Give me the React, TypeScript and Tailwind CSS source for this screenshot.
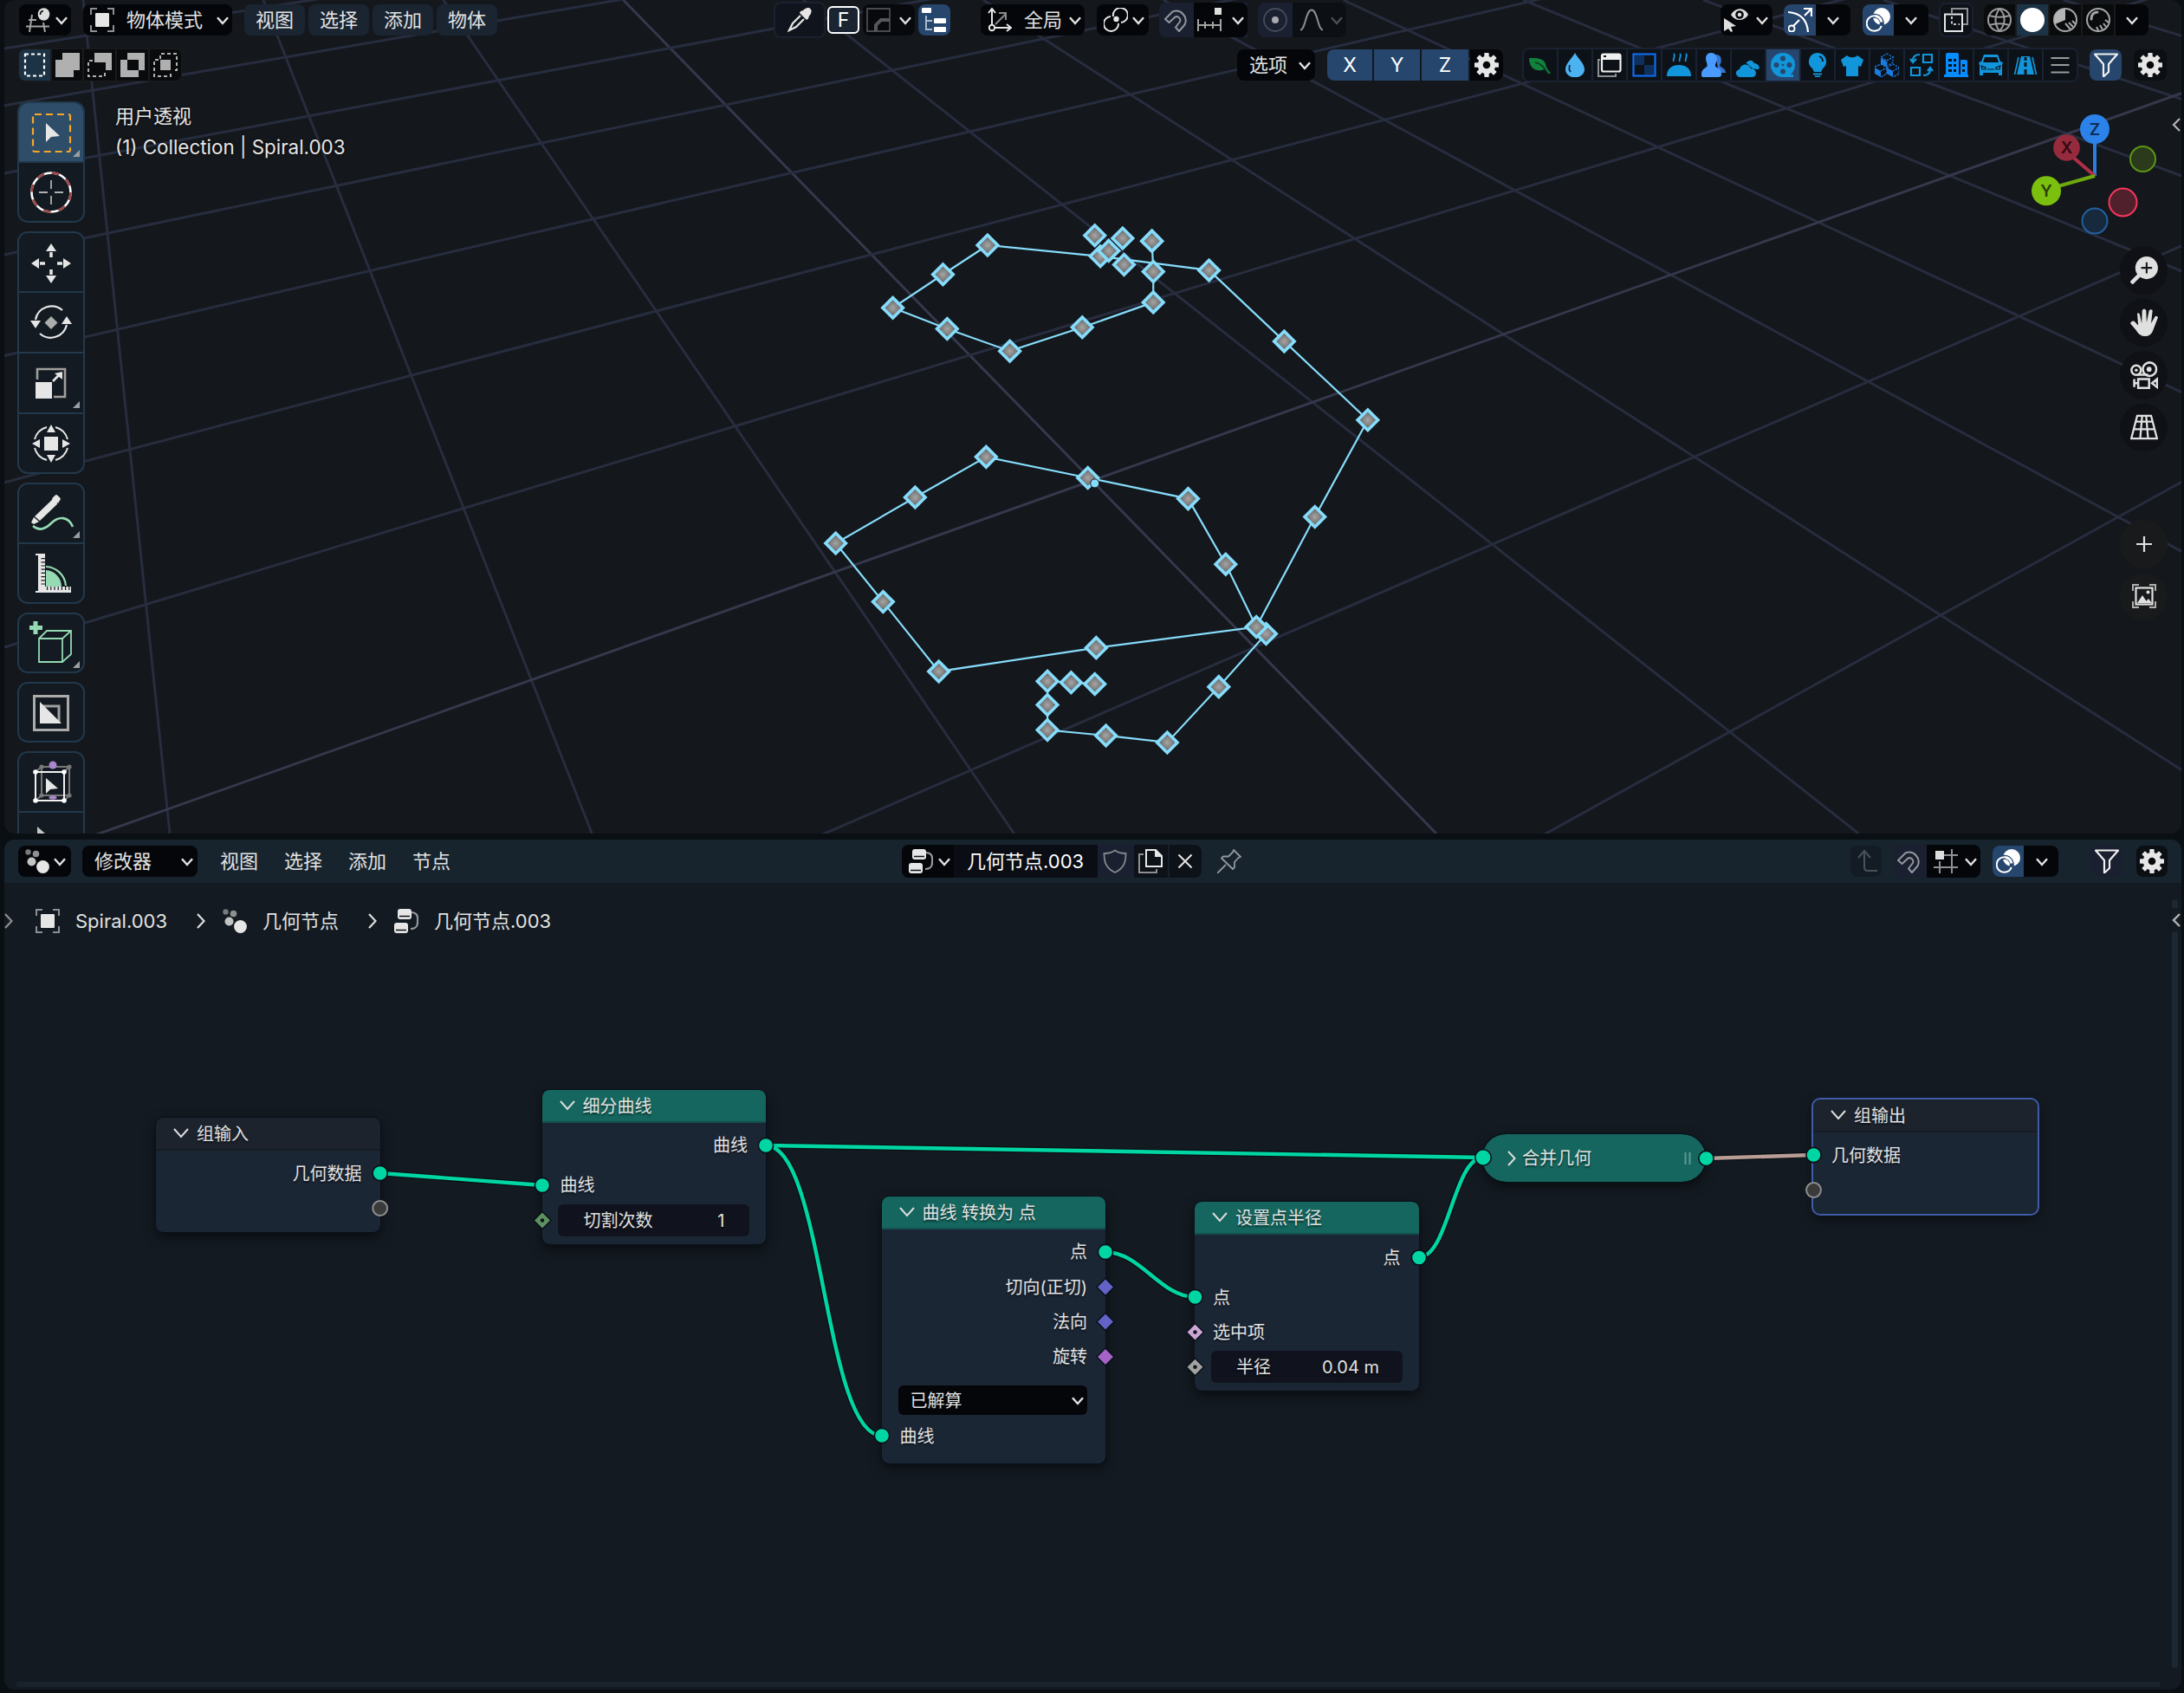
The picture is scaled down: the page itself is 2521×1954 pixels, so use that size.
import React from 'react';

type P = { children?: React.ReactNode; className?: string };

const Ic = ({ children, className = '' }: P) => (
  <svg viewBox="0 0 28 28" className={`w-[28px] h-[28px] shrink-0 ${className}`} fill="none" strokeLinecap="butt">
    {children}
  </svg>
);

const Chev = ({ className = '' }: { className?: string }) => (
  <svg viewBox="0 0 14 10" className={`relative top-px w-[14px] h-[10px] shrink-0 ${className}`} fill="none" stroke="#e2e2e2" strokeWidth="2.4">
    <path d="M1 1.2 7 8l6-6.8" />
  </svg>
);

const Box = ({ children, className = '' }: P) => (
  <div className={`h-[36px] flex items-center shrink-0 ${className}`}>{children}</div>
);

/* ---------- icons ---------- */
const EditorIcon = () => (
  <Ic>
    <g stroke="#a3a3a3" strokeWidth="2">
      <path d="M3 14h9M0 21.500h27M7 8 4 28M20 17l2 11" />
    </g>
    <ellipse cx="20.500" cy="7.500" rx="6.800" ry="7.300" fill="#dedede" />
    <path d="M16.500 8a4 4.500 0 0 1 3.500-4.500" stroke="#05070b" strokeWidth="1.600" />
  </Ic>
);
const ObjectIcon = () => (
  <Ic>
    <path d="M1 8V1h7M20 1h7v7M27 20v7h-7M8 27H1v-7" stroke="#8d8f92" strokeWidth="2" />
    <rect x="6" y="6" width="16" height="16" rx="1" fill="#e6e6e6" />
  </Ic>
);
const DropperIcon = () => (
  <Ic>
    <path d="M15 4c3 0 4-3 8-4 3-.500 5 2 4.500 5-.500 3-3 4-3.500 7.500l-2 1.500-8-8z" fill="#e6e6e6" />
    <path d="m15 9-9 9-4 8 8-4 9-9" stroke="#e6e6e6" strokeWidth="2.200" />
  </Ic>
);
const FalloffIcon = () => (
  <Ic>
    <path d="M1 1h26v26H1z" stroke="#4a4a4c" strokeWidth="1.800" />
    <path d="M11 27v-7l6-6h10" stroke="#55575a" strokeWidth="4" />
  </Ic>
);
const TreeIcon = () => (
  <Ic>
    <rect x="0" y="0" width="11" height="6" rx="1" fill="#fff" />
    <rect x="14" y="12" width="14" height="6" rx="1" fill="#fff" />
    <rect x="14" y="22" width="14" height="6" rx="1" fill="#fff" />
    <path d="M5 9v16h7M5 15h7" stroke="#a9b8ca" strokeWidth="2" />
  </Ic>
);
const OrientIcon = () => (
  <Ic>
    <path d="M5 20V2M1 6l4-5 4 5M8 23h18M22 19l5 4-5 4" stroke="#e6e6e6" strokeWidth="2" />
    <circle cx="5" cy="23" r="3.200" stroke="#e6e6e6" strokeWidth="2" />
    <path d="m9 19 12-12M13 6h8v8" stroke="#8a8a8a" strokeWidth="2" />
  </Ic>
);
const PivotIcon = () => (
  <Ic>
    <path d="M20 17a8.500 8.500 0 1 0-9-7" stroke="#e6e6e6" strokeWidth="2" />
    <path d="M8 10a8.500 8.500 0 1 0 9 8" stroke="#e6e6e6" strokeWidth="2" />
    <circle cx="14.500" cy="13" r="3.200" fill="#e6e6e6" />
  </Ic>
);
const MagnetIcon = () => (
  <Ic>
    <path
      d="M1 13 9.500 4.500a11 11 0 0 1 14 15L17 27l-4-4.500 5-6.500a4.200 4.200 0 0 0-5.500-5.500L5.500 17z"
      stroke="#93969c"
      strokeWidth="2"
      strokeLinejoin="round"
    />
  </Ic>
);
const SnapIncIcon = () => (
  <Ic>
    <rect x="20" y="0" width="8" height="8" fill="#dedede" />
    <path d="M1 13v14M27 13v14M9 16v8M18 16v8M1 20h26" stroke="#a3a3a3" strokeWidth="2" />
  </Ic>
);
const PropIcon = () => (
  <Ic>
    <circle cx="14" cy="14" r="13" stroke="#454b59" strokeWidth="1.800" />
    <circle cx="14" cy="14" r="4" fill="#a7a9ae" />
  </Ic>
);
const BellIcon = () => (
  <Ic>
    <path d="M1 25.500c6 0 6-23 13-23s7 23 13 23" stroke="#8c8d8f" strokeWidth="2" />
  </Ic>
);
const VisIcon = () => (
  <Ic>
    <path d="M8 8c5-9 16-9 20 0-5 8-15 8-20 0z" fill="#dedede" />
    <circle cx="18" cy="8" r="4.800" fill="#06080c" />
    <circle cx="18" cy="8" r="2.300" fill="#dedede" />
    <path d="M0 12v15l5-3 3 4 2-1-2-5 6-1z" fill="#dedede" />
  </Ic>
);
const GizmoIcon = () => (
  <Ic>
    <path d="M0 5c14 1 22 9 23 23M6 21 13 14M19 9l8-8M18 1h9v9" stroke="#fff" strokeWidth="2.200" />
    <circle cx="4" cy="24" r="3.500" stroke="#fff" strokeWidth="2" fill="#26466d" />
  </Ic>
);
const OverlayIcon = () => (
  <Ic>
    <circle cx="18" cy="10" r="10" fill="#fff" />
    <circle cx="9.500" cy="18" r="8.800" stroke="#26466d" strokeWidth="5" />
    <circle cx="9.500" cy="18" r="8.800" stroke="#fff" strokeWidth="2" strokeDasharray="42 14" strokeDashoffset="-3" />
    <path d="M11 9.500c3 .500 6 3 7 7" stroke="#fff" strokeWidth="3" />
  </Ic>
);
const XrayIcon = () => (
  <Ic>
    <path d="M9 6V1h18v18h-5" stroke="#8d8f92" strokeWidth="2" />
    <rect x="1" y="7.500" width="20" height="19.500" stroke="#e6e6e6" strokeWidth="2" />
    <path d="M9 10v9h9" stroke="#c6c6c6" strokeWidth="2" strokeDasharray="3 2.500" />
  </Ic>
);
const WireIcon = () => (
  <Ic>
    <g stroke="#9c9c9c" strokeWidth="2">
      <circle cx="14" cy="14" r="13" />
      <path d="M14 1c-6 8-6 18 0 26M14 1c8 8 7 18 0 26M2 9c7 2 17 2 24 0M2 20c7-2 17-2 24 0" />
    </g>
  </Ic>
);
const SolidIcon = () => (
  <Ic>
    <circle cx="14" cy="14" r="14" fill="#fff" />
  </Ic>
);
const MatIcon = () => (
  <Ic>
    <circle cx="14" cy="14" r="13" stroke="#a6a6a6" strokeWidth="2" />
    <path d="M14 14V1A13 13 0 0 0 2 19z" fill="#b5b5b5" />
    <path d="m14 18 6 7M18 17l5 5M22 15l4 4" stroke="#a6a6a6" strokeWidth="2" />
  </Ic>
);
const RenderIcon = () => (
  <Ic>
    <circle cx="14" cy="14" r="13" stroke="#a6a6a6" strokeWidth="2" />
    <path d="M6 13c0-5 3-8 7-8" stroke="#a6a6a6" strokeWidth="3" strokeLinecap="round" />
    <path d="m12 22 2 4M16 20l3 5M20 18l3 4M22 14l4 3" stroke="#a6a6a6" strokeWidth="2" />
  </Ic>
);
const GearIcon = () => (
  <Ic>
    <g fill="#e6e6e6">
      {[0, 45, 90, 135].map((a) => (
        <rect key={a} x="11.300" y="0" width="5.400" height="28" rx=".8" transform={`rotate(${a} 14 14)`} />
      ))}
      <circle cx="14" cy="14" r="10.300" />
    </g>
    <circle cx="14" cy="14" r="4.300" fill="#06080c" />
  </Ic>
);
const FunnelIcon = () => (
  <Ic>
    <path d="M1 1.500h26L17 13v9l-6 5.500V13z" stroke="#f0f0f0" strokeWidth="2.200" strokeLinejoin="round" />
  </Ic>
);
const DotsIcon = () => (
  <Ic>
    <circle cx="3.500" cy="3.500" r="3.200" fill="#77797c" />
    <circle cx="12.500" cy="5.500" r="3.800" fill="#8d8f92" />
    <circle cx="7.500" cy="14.500" r="5" fill="#c4c4c4" />
    <circle cx="20.500" cy="20.500" r="7.400" fill="#e6e6e6" />
  </Ic>
);
const NodeTreeIcon = () => (
  <Ic>
    <path d="M19 4c10 0 8 8 8 12 0 5-4 7-8 7" stroke="#97999c" strokeWidth="2.200" />
    <rect x="4" y="0" width="16" height="12" rx="3" fill="#e6e6e6" />
    <rect x="0" y="16" width="16" height="12" rx="3" fill="#e6e6e6" />
    <path d="M6 8.500h12M2 24.500h12" stroke="#0c1116" strokeWidth="1.600" />
  </Ic>
);
const ShieldIcon = () => (
  <Ic>
    <path d="M14 1.500c4 3 8 3.500 12.500 3.500 0 10-2 17-12.500 22C3.500 22 1.500 15 1.500 5 6 5 10 4.500 14 1.500z" stroke="#85888e" strokeWidth="1.800" />
  </Ic>
);
const CopyIcon = () => (
  <Ic>
    <path d="M6 6H1v21h20v-4" stroke="#8d8f92" strokeWidth="2" />
    <path d="M9 1h11l7 7v12H9z" stroke="#e6e6e6" strokeWidth="2" />
    <path d="M19 0v9h9z" fill="#e6e6e6" />
  </Ic>
);
const CloseIcon = () => (
  <Ic>
    <path d="m6.500 6.500 15 15m0-15-15 15" stroke="#e6e6e6" strokeWidth="2" />
  </Ic>
);
const PinIcon = () => (
  <Ic>
    <path d="m19 1 8 8-2.500 1-4.500 5v6l-2 2L5 10.500l2-2h6l5-5zM10 18 0 28" stroke="#93989d" strokeWidth="1.800" strokeLinejoin="round" />
  </Ic>
);
const UpIcon = () => (
  <Ic>
    <path d="M8 3v18q0 4 4 4h11M1 10l7-8 7 8" stroke="#4a5058" strokeWidth="2" />
  </Ic>
);
const GridSnapIcon = () => (
  <Ic>
    <path d="M12 7h16M21 0v28M0 21h28M7 14v14" stroke="#8d8f92" strokeWidth="2" />
    <rect x="2" y="2" width="10" height="10" fill="#dedede" />
  </Ic>
);

/* ---------- 3D viewport scene ---------- */
const S = 1.6078;
const gridB = [56, 121.7, 200, 294, 410.5, 556.7, 747, 1001, 1372, 1946];
const upper: number[][] = [
  [786, 491], [769, 490], [752, 489], [752, 506], [752, 524], [794, 528], [838, 533], [875, 493], [909, 455],
];
const middle: number[][] = [
  [781, 343], [708, 328], [657, 357], [600, 390], [634, 432], [674, 482], [787, 465], [902, 450],
  [880, 405], [853, 358], [781, 343],
];
const rise: number[][] = [
  [902, 450], [944, 371], [982, 301.500], [922, 245], [868, 194], [790, 184], [709, 176], [677, 197], [641, 221],
  [680, 236], [725, 252], [777, 235], [828, 217], [828, 195], [827, 173],
];
const cluster: number[][] = [[827, 173], [806, 171], [786, 169], [796, 180], [807, 190]];
const pts = (a: number[][]) => a.map(([x, y]) => `${x * S},${y * S}`).join(' ');

const Scene = () => (
  <svg viewBox="5 0 2513 962" className="absolute inset-0 w-full h-full" fill="none">
    <defs>
      <radialGradient id="pt">
        <stop offset="0" stopColor="#a8a4a2" />
        <stop offset="1" stopColor="#6d7173" />
      </radialGradient>
    </defs>
    <g stroke="#272d3e" strokeWidth="3">
      {Array.from({ length: 12 }, (_, k) => (
        <line key={k} x1={96 + 207.8 * k} y1={0} x2={196 + 487.3 * k} y2={962} stroke={k === 3 ? '#35384b' : undefined} />
      ))}
      {gridB.map((y, k) => (
        <line key={y} x1={5} y1={y} x2={4790} y2={-700} stroke={k === 7 ? '#35384b' : undefined} />
      ))}
    </g>
    <g stroke="#86dcfb" strokeWidth="2.200">
      <polyline points={pts(upper)} />
      <polyline points={pts(middle)} />
      <polyline points={pts(rise)} />
    </g>
    <g fill="url(#pt)" stroke="#86dcfb" strokeWidth="3.600">
      {[...upper, ...middle.slice(1), ...rise.slice(1), ...cluster].map(([x, y], i) => (
        <rect key={i} x={x * S - 8.300} y={y * S - 8.300} width="16.600" height="16.600" transform={`rotate(45 ${x * S} ${y * S})`} />
      ))}
    </g>
    <circle cx={786 * S} cy={347 * S} r="5" fill="#86dcfb" stroke="#14171c" strokeWidth="1" />
  </svg>
);

/* ---------- toolbar ---------- */
const ToolIc = ({ children }: P) => (
  <svg viewBox="0 0 60 60" className="w-[60px] h-[60px]" fill="none">
    {children}
  </svg>
);
const Tool = ({ children, active, corner, first }: { children?: React.ReactNode; active?: boolean; corner?: boolean; first?: boolean }) => (
  <div
    className={`relative shrink-0 flex items-center justify-center ${first ? 'h-[67px]' : 'h-[70px] border-t-2 border-[#22384b]'} ${active ? 'bg-[#2d4d68]' : ''}`}
  >
    {children}
    {corner && (
      <svg viewBox="0 0 8 8" className="absolute right-[4px] bottom-[5px] w-[8px] h-[8px]">
        <path d="M8 0v8H0z" fill="#9a9ea2" />
      </svg>
    )}
  </div>
);
const ToolGroup = ({ children, className = '' }: P) => (
  <div className={`w-[78px] shrink-0 border-2 border-[#22384b] rounded-[12px] bg-[#131a21] overflow-hidden flex flex-col ${className}`}>{children}</div>
);

const Toolbar = () => (
  <div className="flex flex-col gap-[10px] w-[78px]">
    <ToolGroup className="h-[140px]">
      <Tool active corner first>
        <ToolIc>
          <rect x="9" y="9" width="43" height="43" stroke="#f8a62a" strokeWidth="2.200" strokeDasharray="8 5" rx="2" />
          <path d="M24 19v22l6-6 10-1z" fill="#e6e6e6" />
        </ToolIc>
      </Tool>
      <Tool>
        <ToolIc>
          <circle cx="30" cy="30" r="22.500" stroke="#fff" strokeWidth="2.600" />
          <circle cx="30" cy="30" r="22.500" stroke="#9b4747" strokeWidth="2.600" strokeDasharray="8.840 8.840" />
          <path d="M30 16v10M30 34v10M16 30h10M34 30h10" stroke="#b0b0b0" strokeWidth="1.800" />
        </ToolIc>
      </Tool>
    </ToolGroup>
    <ToolGroup className="h-[280px]">
      <Tool first>
        <ToolIc>
          <path d="m30 8 6 9H24zM30 54l6-9H24zM7 31l9-6v12zM53 31l-9-6v12z" fill="#e6e6e6" />
          <path d="M30 18v6M30 38v6M17 31h6M37 31h6" stroke="#e6e6e6" strokeWidth="3.500" />
        </ToolIc>
      </Tool>
      <Tool>
        <ToolIc>
          <path d="M43 16A19 19 0 0 0 12 27M17 43a19 19 0 0 0 31-10" stroke="#e6e6e6" strokeWidth="2.200" />
          <path d="m12 37-6-9h12zM48 23l-6 9h12z" fill="#e6e6e6" />
          <path d="m30 23 7.500 7.500L30 38l-7.500-7.500z" fill="#acacac" />
        </ToolIc>
      </Tool>
      <Tool corner>
        <ToolIc>
          <path d="M14 26V14h32v32H33" stroke="#a09f9d" strokeWidth="2.600" />
          <rect x="12" y="29" width="19" height="19" fill="#e6e6e6" />
          <path d="m32 28 9-9" stroke="#e6e6e6" strokeWidth="2.600" />
          <path d="M43 17v9l-9-7z" fill="#e6e6e6" />
        </ToolIc>
      </Tool>
      <Tool>
        <ToolIc>
          <path d="M11 25a20 20 0 0 1 14-14M35 11a20 20 0 0 1 14 14M49 35a20 20 0 0 1-14 14M25 49a20 20 0 0 1-14-14" stroke="#e6e6e6" strokeWidth="2" />
          <path d="m30 8 5 9H25zM30 52l5-9H25zM8 30l9-5v10zM52 30l-9-5v10z" fill="#e6e6e6" />
          <rect x="22" y="22" width="16" height="16" fill="#e6e6e6" />
        </ToolIc>
      </Tool>
    </ToolGroup>
    <ToolGroup className="h-[140px]">
      <Tool corner first>
        <ToolIc>
          <path d="M9 44c7 6 14 4 21-3 9-9 20-8 25 4" stroke="#95dab2" strokeWidth="2.600" />
          <path d="m34 11 5.500 5.500L16 39l-6 3-3-2 3-6z" fill="#e6e6e6" />
          <path d="m33 13 6 6" stroke="#131a21" strokeWidth="1.500" />
          <rect x="32" y="9" width="8" height="8" rx="2" transform="rotate(45 36 13)" fill="#e6e6e6" />
          <path d="m10 33 7 6" stroke="#131a21" strokeWidth="1.500" />
        </ToolIc>
      </Tool>
      <Tool>
        <ToolIc>
          <path d="M24 22a24 24 0 0 1 23 22" stroke="#95dab2" strokeWidth="2.200" />
          <path d="M24 26a19 19 0 0 1 18 19H24z" fill="#95dab2" />
          <path d="M12 7h11v38h30v7H12v-2h3V9h-3z" fill="#e6e6e6" />
          <path d="M21 12v32" stroke="#131a21" strokeWidth="5" strokeDasharray="1.200 3" />
          <path d="M25 47h27" stroke="#131a21" strokeWidth="4" strokeDasharray="1.200 3" />
        </ToolIc>
      </Tool>
    </ToolGroup>
    <ToolGroup className="h-[70px]">
      <Tool corner first>
        <ToolIc>
          <path d="M12 4v15M5 11.500h15" stroke="#95dab2" strokeWidth="5" />
          <path d="M16 24h27v27H16zM16 24l9-9h28v27l-10 9M43 24l10-9" stroke="#95dab2" strokeWidth="1.800" />
        </ToolIc>
      </Tool>
    </ToolGroup>
    <ToolGroup className="h-[70px]">
      <Tool first>
        <ToolIc>
          <rect x="10.500" y="10.500" width="39" height="39" stroke="#ababab" strokeWidth="3" />
          <path d="M19 22h20v20" stroke="#a0a0a0" strokeWidth="3" />
          <path d="M17 17v25h25z" fill="#e6e6e6" />
        </ToolIc>
      </Tool>
    </ToolGroup>
    <ToolGroup className="h-[140px]">
      <Tool first>
        <ToolIc>
          <g stroke="#787878" strokeWidth="2">
            <path d="M19 12h32v33H19zM12 18l7-6M45 18l6-6M45 51l6-6M12 51l7-6" />
          </g>
          <g fill="#787878">
            <circle cx="19" cy="12" r="2.600" />
            <circle cx="51" cy="12" r="2.600" />
            <circle cx="51" cy="45" r="2.600" />
            <circle cx="19" cy="45" r="2.600" />
          </g>
          <rect x="12" y="18" width="33" height="33" stroke="#f0f0f0" strokeWidth="2" />
          <g fill="#fff">
            <circle cx="12" cy="18" r="2.800" />
            <circle cx="45" cy="18" r="2.800" />
            <circle cx="45" cy="51" r="2.800" />
            <circle cx="12" cy="51" r="2.800" />
          </g>
          <circle cx="32" cy="10" r="4.500" fill="#aa87cf" />
          <ellipse cx="32" cy="47.500" rx="4.500" ry="2" fill="#aa87cf" />
          <path d="M24 25v18l5-5 9-1z" fill="#e6e6e6" />
        </ToolIc>
      </Tool>
      <Tool>
        <ToolIc>
          <path d="M14 12v24l7-7 11-1z" fill="#c6c6c6" />
        </ToolIc>
      </Tool>
    </ToolGroup>
  </div>
);

/* ---------- category filter strip ---------- */
const cats: { k: string; el: React.ReactNode; on?: boolean }[] = [
  { k: 'leaf', el: <><path d="M1 6c8 0 20-1 20 12-11 6-20 0-20-12z" fill="#11813b" /><path d="M8 11c5 1 10 4 15 13" stroke="#0b3a20" strokeWidth="1.600" /><path d="m20 17 5 7" stroke="#11813b" strokeWidth="2" /></> },
  { k: 'drop', el: <><path d="M14 0c3 6 11 12 11 19a11 9.500 0 0 1-22 0C3 12 11 6 14 0z" fill="#4cb3f0" /><path d="M8 14c-1 3-1 6 1 8" stroke="#0a2c48" strokeWidth="1.800" /></> },
  { k: 'win', el: <><path d="M3 8H1v19h20v-3" stroke="#8d8f92" strokeWidth="2" /><rect x="5" y="1.500" width="21.500" height="20" rx="2" stroke="#f0f0f0" strokeWidth="2.200" /><path d="M5 2h21v6H5z" fill="#f0f0f0" /><path d="M7 4h3" stroke="#0d1219" strokeWidth="2" /></> },
  { k: 'check', el: <><rect x="1.500" y="1.500" width="25" height="25" stroke="#0f6df0" strokeWidth="2.200" /><path d="M3 3h11v11H3zM14 14h11v11H14z" fill="#0f2f5c" /></> },
  { k: 'bowl', el: <><path d="M8 1c3 3-2 5 0 9M15 1c3 3-2 5 0 9M22 1c3 3-2 5 0 9" stroke="#1296db" strokeWidth="1.800" /><path d="M0 27C0 18 6 14 14 14s14 4 14 13z" fill="#1296db" /></> },
  { k: 'user', el: <><path d="M16 2c8-1 8 9 5 12 0 3 7 3 7 9h-8" fill="#3574d0" /><path d="M11 0c7 0 8 7 6 11-2 4-1 5 1 6 3 1 5 3 5 8 0 2-1 3-4 3H3c-3 0-3-1-3-3 0-5 3-7 5-8 2-1 2-3 1-6C4 6 5 0 11 0z" fill="#4a9bff" /></> },
  { k: 'cloud', el: <><path d="M11 11c4-5 9-3 10 0 6 1 8 6 5 9l-6-1" fill="#1296db" stroke="#0d1219" strokeWidth="1.500" /><path d="M5 28c-6 0-7-8-1-9 1-6 10-8 13-1 7 0 8 9 2 10z" fill="#1296db" /></> },
  { k: 'reel', on: true, el: <><circle cx="14" cy="14" r="14" fill="#1296db" /><path d="M14 26.500h12" stroke="#1296db" strokeWidth="3" /><g fill="#26466d"><circle cx="14" cy="6.500" r="3" /><circle cx="14" cy="21.500" r="3" /><circle cx="6.500" cy="14" r="3" /><circle cx="21.500" cy="14" r="3" /><circle cx="14" cy="14" r="1.300" /></g></> },
  { k: 'bulb', el: <><path d="M14 0a10 10 0 0 1 6 18l-2 4h-8l-2-4A10 10 0 0 1 14 0z" fill="#1296db" /><path d="M16 4c3 1 4 3 4 6" stroke="#0d1219" strokeWidth="1.800" /><path d="M9 24.500h10M11 27.500h6" stroke="#1296db" strokeWidth="1.800" /></> },
  { k: 'shirt', el: <path d="M8 3c3 3 9 3 12 0l7 5-3 8-3-1v12H7V15l-3 1-3-8z" fill="#1296db" /> },
  { k: 'cubes', el: <><path d="m14 1 7 4-7 4-7-4z" stroke="#1a7ce0" strokeWidth="1.400" strokeDasharray="2 1.500" /><path d="m14 9 7-4v6l-7 4z" stroke="#1a7ce0" strokeWidth="1.200" strokeDasharray="2 1.500" /><path d="m7 6 7 4v6l-7-3zM0 17l7 4v7l-7-4zM14 17l7 4v7l-7-4z" fill="#1a7ce0" /><path d="m0 16 7-3 7 4-7 4M14 17l7-4 7 4-7 4M28 17v7l-7 4M14 18v6l-7 4" stroke="#1a7ce0" strokeWidth="1.400" strokeDasharray="2.500 1.200" /></> },
  { k: 'swap', el: <><path d="M16 2h10v9H16zM2 17h10v9H2z" stroke="#1296db" strokeWidth="2.200" /><path d="M12 2C6 2 4 5 4 9M1 7l3 4 4-4M16 26c6 0 8-3 8-7M21 21l3-4 3 4" stroke="#1296db" strokeWidth="2.200" /></> },
  { k: 'build', el: <><path d="M2 2q0-2 2-2h11q2 0 2 2v26H2zM19 8h6q2 0 2 2v18h-8zM0 25h28v3H0z" fill="#068cff" /><g fill="#0d1219"><rect x="5" y="7" width="4" height="3" /><rect x="11" y="7" width="3" height="3" /><rect x="5" y="13" width="4" height="3" /><rect x="11" y="13" width="3" height="3" /><rect x="5" y="19" width="4" height="3" /><rect x="11" y="19" width="3" height="3" /><rect x="21" y="13" width="3" height="3" /><rect x="21" y="19" width="3" height="3" /></g></> },
  { k: 'car', el: <><path d="M6 2h16l3 8 3 1-1 3v12h-4v-3H5v3H1V14l-1-3 3-1z" fill="#1296db" /><path d="M7 5h14l2 6H5z" fill="#0d1219" /><path d="M3 15l5 2v2H4zM25 15l-5 2v2h4zM10 19h8" stroke="#0d1219" strokeWidth="1.200" /></> },
  { k: 'road', el: <><path d="M9 4h10l5 21H4z" fill="#1296db" /><path d="M14 5v4M14 11v5M14 19v6" stroke="#0d1219" strokeWidth="3" /><path d="M6 5 1.500 25M22 5l4.500 20" stroke="#1296db" strokeWidth="1.600" /></> },
  { k: 'menu', el: <path d="M3.500 6h21M3.500 14h21M3.500 22.500h21" stroke="#9a9a9a" strokeWidth="2" /> },
];

const menus = ['视图', '选择', '添加', '物体'];

const Viewport = () => (
  <section className="relative ml-[5px] w-[2513px] h-[962px] shrink-0 bg-[#14171c] rounded-[12px] overflow-hidden flex flex-col">
    <Scene />
    <div className="relative flex items-center h-[46px] shrink-0">
      <Box className="ml-[17px] w-[60px] rounded-[8px] bg-[#04060a] pl-[8px] gap-[6px]"><EditorIcon /><Chev /></Box>
      <Box className="ml-[14px] w-[172px] rounded-[8px] bg-[#04060a] pl-[8px]">
        <ObjectIcon /><span className="ml-[14px] w-[104px]">物体模式</span><Chev />
      </Box>
      <div className="flex ml-[14px] gap-[4px] w-[611px]">
        {menus.map((m) => (
          <Box key={m} className="w-[70px] justify-center rounded-[8px] bg-[#1b2531]">{m}</Box>
        ))}
      </div>
      <div className="flex items-center justify-center w-[60px] h-[42px] rounded-[8px] bg-[#10151d] border-2 border-[#1a2030]"><DropperIcon /></div>
      <div className="ml-[2px] flex items-center justify-center w-[37px] h-[32px] rounded-[6px] bg-[#1b2531] border-2 border-white text-[23px] text-white">F</div>
      <Box className="ml-[4px] w-[60px] rounded-[8px] bg-[#07090d] pl-[4px] gap-[10px]"><FalloffIcon /><Chev /></Box>
      <Box className="ml-[4px] w-[37px] rounded-[8px] bg-[#26466d] pl-[4px]"><TreeIcon /></Box>
      <Box className="ml-[35px] w-[120px] rounded-[8px] bg-[#04060a] pl-[8px]"><OrientIcon /><span className="ml-[14px] w-[52px]">全局</span><Chev /></Box>
      <Box className="ml-[14px] w-[60px] rounded-[8px] bg-[#04060a] pl-[8px] gap-[5px]"><PivotIcon /><Chev /></Box>
      <div className="flex ml-[12px] w-[102px] h-[40px] items-center rounded-l-[8px] bg-[#1a2030]">
        <div className="w-[40px] pl-[6px]"><MagnetIcon /></div>
        <Box className="w-[62px] h-[40px] rounded-r-[8px] bg-[#04060a] pl-[4px] gap-[12px]"><SnapIncIcon /><Chev /></Box>
      </div>
      <div className="flex ml-[12px] w-[102px] h-[40px] items-center rounded-[8px] bg-[#1a2030]">
        <div className="w-[40px] pl-[6px]"><PropIcon /></div>
        <Box className="w-[62px] h-[40px] rounded-r-[8px] bg-[#0c0f14] pl-[8px] gap-[8px]"><BellIcon /><Chev className="opacity-30" /></Box>
      </div>
      <Box className="ml-[432px] w-[60px] rounded-[8px] bg-[#04060a] pl-[4px] gap-[9px]"><VisIcon /><Chev /></Box>
      <Box className="ml-[13px] w-[77px] rounded-[8px] bg-[#04060a] overflow-hidden">
        <Box className="w-[37px] pl-[5px] bg-[#26466d]"><GizmoIcon /></Box><Chev className="ml-[13px]" />
      </Box>
      <Box className="ml-[14px] w-[76px] rounded-[8px] bg-[#04060a] overflow-hidden">
        <Box className="w-[36px] pl-[4px] bg-[#26466d]"><OverlayIcon /></Box><Chev className="ml-[13px]" />
      </Box>
      <div className="ml-[12px] w-[40px] h-[40px] rounded-[8px] bg-[#0d1219] border-2 border-[#1a2030] flex items-center justify-center"><XrayIcon /></div>
      <div className="ml-[12px] flex rounded-[8px] overflow-hidden gap-[2px] bg-[#1a1a1b]">
        <Box className="w-[36px] bg-[#0a0b0d] justify-center"><WireIcon /></Box>
        <Box className="w-[36px] bg-[#1c3346] justify-center"><SolidIcon /></Box>
        <Box className="w-[36px] bg-[#0a0b0d] justify-center"><MatIcon /></Box>
        <Box className="w-[36px] bg-[#0a0b0d] justify-center"><RenderIcon /></Box>
        <Box className="w-[38px] bg-[#04060a] justify-center"><Chev /></Box>
      </div>
    </div>
    <div className="relative flex items-center h-[40px] mt-[9px] shrink-0">
      <div className="ml-[16px] flex rounded-[8px] overflow-hidden gap-[2px] bg-[#1a1b1c] border border-[#1a1b1c]">
        <Box className="w-[36px] bg-[#1c3346] justify-center"><Ic><path d="M3 1.500h22v25H3z" stroke="#fff" strokeWidth="2.200" strokeDasharray="4 3" /></Ic></Box>
        <Box className="w-[35px] bg-[#0a0b0d] justify-center"><Ic><path d="M8 0h20v20h-7v8H0V8h8z" fill="#b0b0b0" /></Ic></Box>
        <Box className="w-[36px] bg-[#0a0b0d] justify-center"><Ic><path d="M8 0h20v20h-7v-9H8z" fill="#b0b0b0" /><path d="M6 9H1v18h19v-4" stroke="#b0b0b0" strokeWidth="2" strokeDasharray="4 3" /></Ic></Box>
        <Box className="w-[36px] bg-[#0a0b0d] justify-center"><Ic><path fillRule="evenodd" d="M8 0h20v20h-7v8H0V8h8zM8 8v12h13V8z" fill="#b0b0b0" /></Ic></Box>
        <Box className="w-[36px] bg-[#0a0b0d] justify-center"><Ic><path d="M8 7V1h19v19h-5M6 8H1v19h19v-5" stroke="#b0b0b0" strokeWidth="2" strokeDasharray="4 3" /><rect x="8" y="8" width="12" height="12" fill="#b0b0b0" /></Ic></Box>
      </div>
      <Box className="ml-[1218px] w-[90px] rounded-[8px] bg-[#04060a] pl-[14px]"><span className="w-[57px]">选项</span><Chev /></Box>
      <div className="ml-[14px] flex gap-[2px] rounded-[8px] overflow-hidden text-white text-[23px]">
        <Box className="w-[52px] bg-[#26466d] justify-center">X</Box>
        <Box className="w-[53px] bg-[#26466d] justify-center">Y</Box>
        <Box className="w-[54px] bg-[#26466d] justify-center">Z</Box>
        <Box className="w-[38px] bg-[#04060a] justify-center"><GearIcon /></Box>
      </div>
      <div className="ml-[22px] flex gap-[2px] rounded-[8px] overflow-hidden bg-[#1a2130] border-2 border-[#1a2130]">
        {cats.map((c) => (
          <Box key={c.k} className={`w-[38px] justify-center ${c.on ? 'bg-[#26466d]' : 'bg-[#0d1219]'}`}><Ic>{c.el}</Ic></Box>
        ))}
      </div>
      <Box className="ml-[13px] w-[37px] rounded-[8px] bg-[#26466d] justify-center"><FunnelIcon /></Box>
      <Box className="ml-[14px] w-[38px] rounded-[8px] bg-[#0b0e13] justify-center"><GearIcon /></Box>
    </div>
    <div className="relative flex mt-[22px] shrink-0">
      <div className="ml-[15px]"><Toolbar /></div>
      <div className="ml-[35px] leading-[36px] text-[#e6e6e6] [text-shadow:0_0_3px_#000]">
        <div className="-mt-[1px]">用户透视</div>
        <div className="text-[22.400px]">(1) Collection | Spiral.003</div>
      </div>
      <div className="ml-auto w-[180px] flex flex-col items-end">
        <svg viewBox="2338 117 180 160" className="w-[180px] h-[160px]" fill="none">
          <path d="M2418 203V160" stroke="#2b7de0" strokeWidth="4" />
          <path d="m2418 203-28-24" stroke="#b02f45" strokeWidth="4" />
          <path d="m2418 203-46 13" stroke="#6ea910" strokeWidth="4" />
          <circle cx="2418" cy="149" r="17" fill="#2b82e9" />
          <circle cx="2385.500" cy="170.500" r="15.300" fill="#962b3d" />
          <circle cx="2362" cy="220.300" r="17" fill="#7bc00f" />
          <circle cx="2473.500" cy="183.500" r="14.500" fill="#2a3a1b" stroke="#5e9613" strokeWidth="2" />
          <circle cx="2450.500" cy="233.500" r="16" fill="#50212d" stroke="#f5375a" strokeWidth="2" />
          <circle cx="2418" cy="255" r="14.500" fill="#17293d" stroke="#22609f" strokeWidth="2" />
          <g fontFamily="Inter" fontWeight="600" fontSize="19" textAnchor="middle">
            <text x="2418" y="156" fill="#0e2c55">Z</text>
            <text x="2385.500" y="177" fill="#330a12">X</text>
            <text x="2362" y="227" fill="#274003">Y</text>
          </g>
          <path d="m2516 137-7 7 7 7" stroke="#b5b5b5" strokeWidth="2.200" />
        </svg>
        <div className="mr-[16px] mt-[7px] flex flex-col gap-[5px]">
          {[
            <><circle cx="16.500" cy="11.500" r="11.400" fill="#e0e0e0" /><path d="M16.500 6v11M11 11.500h11" stroke="#14171c" strokeWidth="1.800" /><path d="M9 19 1 27" stroke="#e0e0e0" strokeWidth="4" /></>,
            <path d="M7 5q2-1 2.500 1l2 9L12 2q2-3 4 0l.500 12L19 2q2-2 3.500 0L21 15l4-7q2-1 3 1l-5 13q-2 6-8 6-6 0-9-6l-6-7q1-3 4-2l4 4z" fill="#e0e0e0" />,
            <><g stroke="#e0e0e0" strokeWidth="2.200"><circle cx="6" cy="9" r="4.800" /><circle cx="19.500" cy="8" r="6.800" /><path d="M7 13.500h11M8 18h11v9H8zM4 18v8M4 22h4M27 18v8l-5-4z" /></g><circle cx="19" cy="8" r="2.500" fill="#e0e0e0" /><circle cx="6" cy="9" r="1.600" fill="#e0e0e0" /></>,
            <path d="M7 2.500h14l6 23H1zM5.500 8.500h17M3.500 16h21M12 2l-2 24M16 2l2 24" stroke="#e0e0e0" strokeWidth="2" />,
          ].map((el, i) => (
            <div key={i} className="w-[55px] h-[55.500px] rounded-full bg-[#0f1116] flex items-center justify-center">
              <svg viewBox="0 0 28 28" className="w-[32px] h-[32px]" fill="none">{el}</svg>
            </div>
          ))}
        </div>
        <div className="mr-[16px] mt-[79px] flex flex-col gap-[5px]">
          {[
            <path d="M14 5v18M5 14h18" stroke="#e0e0e0" strokeWidth="2.200" />,
            <><path d="M1 8V1h7M20 1h7v7M27 20v7h-7M8 27H1v-7" stroke="#b0b0b0" strokeWidth="2" /><rect x="4.500" y="4.500" width="19" height="19" stroke="#e0e0e0" strokeWidth="2.200" /><path d="m6 22 6-9 6 9zM14 22l5-5 4 5z" fill="#e0e0e0" /><circle cx="18.500" cy="9.500" r="2" fill="#e0e0e0" /></>,
          ].map((el, i) => (
            <div key={i} className="w-[55px] h-[55.500px] rounded-full bg-[#191a1b] flex items-center justify-center"><Ic>{el}</Ic></div>
          ))}
        </div>
      </div>
    </div>
  </section>
);

/* ---------- node editor ---------- */
const Crumb = ({ className = '' }: { className?: string }) => (
  <svg viewBox="0 0 10 18" className={`w-[10px] h-[18px] shrink-0 ${className}`} fill="none" stroke="#dcdcdc" strokeWidth="2.200">
    <path d="m1 1 7.500 8L1 17" />
  </svg>
);

const Node = ({ x, y, w, h, title, teal, sel, children }: { x: number; y: number; w: number; h: number; title: string; teal?: boolean; sel?: boolean; children?: React.ReactNode }) => (
  <div
    className={`absolute rounded-[8px] bg-[#1b2635] shadow-[0_5px_14px_rgba(0,0,0,0.55)] text-[20px] [text-shadow:0_2px_2px_rgba(0,0,0,0.5)] ${sel ? 'outline-2 outline-[#3f5ba9]' : 'outline-1 outline-[#0a101a]'}`}
    style={{ left: x, top: y, width: w, height: h }}
  >
    <div className={`h-[38px] rounded-t-[8px] flex items-center border-b-2 ${teal ? 'bg-[#14665e] border-[#15504e]' : 'bg-[#1c232d] border-[#161c22]'}`}>
      <svg viewBox="0 0 18 12" className="ml-[20px] w-[18px] h-[12px]" fill="none" stroke="#dcdcdc" strokeWidth="2"><path d="m1 1 8 9 8-9" /></svg>
      <span className="ml-[9px] pt-[2px]">{title}</span>
    </div>
    {children}
  </div>
);
const Label = ({ y, right, children }: { y: number; right?: boolean; children: React.ReactNode }) => (
  <div className={`absolute h-[30px] leading-[30px] ${right ? 'right-[21px]' : 'left-[21px]'}`} style={{ top: y - 14 }}>{children}</div>
);

const Links = () => (
  <svg viewBox="5 1019 2513 935" className="absolute left-0 top-0 w-[2513px] h-[935px]" fill="none">
    {['#0a1014', '#00d6a3'].map((c, i) => (
      <g key={c} stroke={c} strokeWidth={i ? 4.4 : 7}>
        <path d="M439 1354 L626 1368" />
        <path d="M884 1322 L1712 1336" />
        <path d="M884 1322C951 1322 951 1657 1018 1657" />
        <path d="M1276 1445C1316 1445 1340 1497 1379 1497" />
        <path d="M1638 1451C1672 1451 1678 1336 1712 1336" />
      </g>
    ))}
    <path d="M1969 1337 L2093 1333" stroke="#0a1014" strokeWidth="7" />
    <path d="M1969 1337 L2093 1333" stroke="#b79d95" strokeWidth="4.4" />
  </svg>
);

const circles: number[][] = [
  [438.7, 1354], [626, 1368], [884, 1322], [1018, 1657], [1276, 1445], [1379.5, 1497], [1638, 1451.5], [1712, 1336], [1969.5, 1337], [2093.5, 1333],
];
const diamonds: [number, number, string, boolean][] = [
  [626, 1408.5, '#5d9160', true], [1276, 1485.5, '#6363c7', false], [1276, 1525.5, '#6363c7', false], [1276, 1566, '#a563c7', false],
  [1379.5, 1537.5, '#cca6d6', true], [1379.5, 1577.7, '#a1a1a1', true],
];
const Sockets = () => (
  <svg viewBox="5 1019 2513 935" className="absolute left-0 top-0 w-[2513px] h-[935px]" fill="none">
    {circles.map(([x, y]) => (
      <circle key={`${x}-${y}`} cx={x} cy={y} r={x === 1712 ? 9.2 : 8.6} fill="#00d6a3" stroke="#0a1018" strokeWidth="1.600" />
    ))}
    {[[438.700, 1394.500], [2093.500, 1373.500]].map(([x, y]) => (
      <circle key={x} cx={x} cy={y} r="8.400" fill="#3a3a3a" stroke="#8f8f8f" strokeWidth="2" />
    ))}
    {diamonds.map(([x, y, c, dot]) => (
      <g key={`${x}-${y}`}>
        <path d={`M${x - 10} ${y}l10-10 10 10-10 10z`} fill={c} stroke="#0a1018" strokeWidth="1.500" />
        {dot && <circle cx={x} cy={y} r="2.300" fill="#10161c" />}
      </g>
    ))}
  </svg>
);

const NodeEditor = () => (
  <section className="relative ml-[5px] mt-[7px] w-[2513px] h-[981px] shrink-0 bg-[#131a21] rounded-[12px] overflow-hidden">
    <div className="h-[50px] bg-[#17242e] flex items-center">
      <Box className="ml-[16px] w-[61px] rounded-[8px] bg-[#04060a] pl-[8px] gap-[5px]"><DotsIcon /><Chev /></Box>
      <Box className="ml-[13px] w-[133px] rounded-[8px] bg-[#04060a] pl-[14px]"><span className="w-[100px]">修改器</span><Chev /></Box>
      <div className="flex ml-[26px] w-[787px] gap-[30px]">
        {['视图', '选择', '添加', '节点'].map((m) => <span key={m}>{m}</span>)}
      </div>
      <div className="flex items-center h-[38px] rounded-[8px] overflow-hidden bg-[#0d1219] w-[346px]">
        <Box className="w-[60px] h-[38px] bg-[#04060a] pl-[8px] gap-[6px]"><NodeTreeIcon /><Chev /></Box>
        <Box className="w-[166px] h-[38px] bg-[#0a0d14] pl-[15px] text-white">几何节点.003</Box>
        <Box className="w-[42px] h-[38px] bg-[#1a2030] pl-[6px]"><ShieldIcon /></Box>
        <Box className="w-[39px] h-[38px] pl-[5px]"><CopyIcon /></Box>
        <Box className="w-[39px] h-[38px] pl-[4px] border-l-2 border-[#17202a]"><CloseIcon /></Box>
      </div>
      <div className="ml-[18px] w-[28px] h-[28px]"><PinIcon /></div>
      <Box className="ml-[703px] w-[36px] rounded-[8px] bg-[#131c24] pl-[8px]"><UpIcon /></Box>
      <div className="ml-[14px] flex h-[38px] rounded-[8px] overflow-hidden bg-[#1a2030]">
        <Box className="w-[38px] h-[38px] pl-[4px]"><MagnetIcon /></Box>
        <Box className="w-[62px] h-[38px] bg-[#04060a] pl-[8px] gap-[8px]"><GridSnapIcon /><Chev /></Box>
      </div>
      <Box className="ml-[14px] w-[76px] rounded-[8px] bg-[#04060a] overflow-hidden">
        <Box className="w-[36px] pl-[4px] bg-[#26466d]"><OverlayIcon /></Box><Chev className="ml-[14px]" />
      </Box>
      <Box className="ml-[37px] w-[38px] rounded-[8px] bg-[#1a2030] justify-center"><FunnelIcon /></Box>
      <Box className="ml-[15px] w-[36px] rounded-[8px] bg-[#0b0e13] justify-center"><GearIcon /></Box>
    </div>
    <div className="relative h-[931px]">
      <div className="flex items-center h-[88px] text-[#e2e2e2]">
        <Crumb className="opacity-60" />
        <div className="ml-[26px] w-[28px]"><ObjectIcon /></div>
        <span className="ml-[18px] w-[140px]">Spiral.003</span>
        <Crumb />
        <div className="ml-[20px]"><DotsIcon /></div>
        <span className="ml-[18px] w-[122px]">几何节点</span>
        <Crumb />
        <div className="ml-[20px]"><NodeTreeIcon /></div>
        <span className="ml-[18px]">几何节点.003</span>
      </div>
      <div className="absolute right-[4px] top-[19px] w-[7px] h-[887px] rounded-full bg-[#1d2731]" />
      <div className="absolute left-[14px] right-[24px] bottom-[3px] h-[6px] rounded-full bg-[#1a232c]" />
      <div className="absolute right-0 top-[29px] w-[15px] h-[28px] rounded-l-[6px] bg-[#131a21]/80">
        <svg viewBox="0 0 15 28" className="w-[15px] h-[28px]" fill="none" stroke="#b5b5b5" strokeWidth="2.400"><path d="m13 7-7 7 7 7" /></svg>
      </div>
      <div className="absolute inset-0">
        <Links />
        <Node x={175} y={271} w={258.500} h={132} title="组输入">
          <Label y={64} right>几何数据</Label>
        </Node>
        <Node x={620.500} y={239} w={258.500} h={178} title="细分曲线" teal>
          <Label y={63} right>曲线</Label>
          <Label y={109}>曲线</Label>
          <div className="absolute left-[18px] top-[132px] w-[221px] h-[37px] rounded-[6px] bg-[#10131d] flex items-center justify-between pl-[30px] pr-[28px]"><span>切割次数</span><span>1</span></div>
        </Node>
        <Node x={1012.500} y={362} w={258.500} h={307.500} title="曲线 转换为 点" teal>
          <Label y={63} right>点</Label>
          <Label y={104} right>切向(正切)</Label>
          <Label y={144} right>法向</Label>
          <Label y={184} right>旋转</Label>
          <div className="absolute left-[19px] top-[218px] w-[218px] h-[34px] rounded-[6px] bg-[#04060a] flex items-center justify-between pl-[14px] pr-[4px]"><span className="pt-[2px]">已解算</span><Chev /></div>
          <Label y={276}>曲线</Label>
        </Node>
        <Node x={1374} y={368} w={258.500} h={218} title="设置点半径" teal>
          <Label y={64} right>点</Label>
          <Label y={110}>点</Label>
          <Label y={150}>选中项</Label>
          <div className="absolute left-[19px] top-[172px] w-[221px] h-[37px] rounded-[6px] bg-[#10131d] flex items-center justify-between pl-[29px] pr-[27px]"><span>半径</span><span>0.04 m</span></div>
        </Node>
        <div className="absolute left-[1706px] top-[290px] w-[258px] h-[55px] rounded-full bg-[#14665e] outline-1 outline-[#0a101a] shadow-[0_5px_14px_rgba(0,0,0,0.55)] flex items-center text-[20px] [text-shadow:0_2px_2px_rgba(0,0,0,0.5)]">
          <svg viewBox="0 0 10 18" className="ml-[29px] w-[10px] h-[18px]" fill="none" stroke="#dcdcdc" strokeWidth="2"><path d="m1 1 7.500 8L1 17" /></svg>
          <span className="ml-[7px]">合并几何</span>
          <svg viewBox="0 0 8 14" className="ml-auto mr-[17px] w-[8px] h-[14px]" stroke="#5c9a94" strokeWidth="2"><path d="M1.500 0v14M6.500 0v14" /></svg>
        </div>
        <Node x={2088} y={250} w={259} h={132} title="组输出" sel>
          <Label y={64}>几何数据</Label>
        </Node>
        <Sockets />
      </div>
    </div>
  </section>
);

export default function App() {
  return (
    <div className="w-[2521px] h-[1954px] bg-[#0a0f13] overflow-hidden flex flex-col text-[22px] leading-none text-[#e2e2e2] whitespace-nowrap font-['Inter','Noto_Sans_CJK_SC',sans-serif]">
      <Viewport />
      <NodeEditor />
    </div>
  );
}
